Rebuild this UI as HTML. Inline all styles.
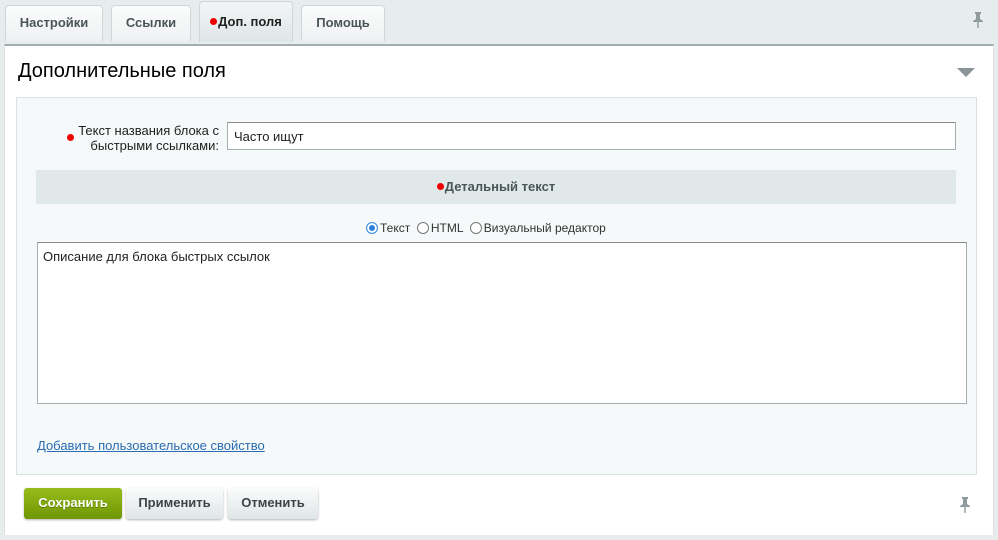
<!DOCTYPE html>
<html><head><meta charset="utf-8"><style>
*{box-sizing:border-box}
body{margin:0;width:998px;height:540px;background:#e7eced;font-family:"Liberation Sans",Arial,sans-serif;position:relative;overflow:hidden}
.tab{position:absolute;top:5px;height:36px;border:1px solid #cfd6d8;border-bottom:none;border-radius:4px 4px 0 0;background:linear-gradient(#fbfcfc,#eef1f2);font-size:13px;font-weight:bold;color:#4b5557;text-align:center;line-height:33px}
.tab.act{top:1px;height:41px;background:linear-gradient(#f2f5f5,#dfe6e8);color:#222;line-height:40px}
.dot{display:inline-block;width:7px;height:7px;border-radius:50%;background:#e00;vertical-align:1px;margin-right:1px}
#panel{position:absolute;left:4px;top:44px;width:990px;height:491px;background:#fff;border-top:2px solid #a3acae;border-left:1px solid #dde3e4;border-right:1px solid #dde3e4}
h1{position:absolute;left:18px;top:60px;margin:0;font-size:20px;font-weight:normal;color:#000}
#inner{position:absolute;left:16px;top:97px;width:961px;height:378px;background:#f5f9f9;border:1px solid #dbe1e2}
.abs{position:absolute}
.btn{position:absolute;top:488px;height:31px;border-radius:3px;font-size:13px;font-weight:bold;text-align:center;line-height:30px;color:#3c4446;background:linear-gradient(#fbfcfc,#dfe5e7);box-shadow:0 1px 2px rgba(0,0,0,.3)}
.radio{display:inline-block;width:12px;height:12px;border:1px solid #777;border-radius:50%;vertical-align:-2px;margin-right:2px;background:#fff}
</style></head><body>
<div class="tab" style="left:5px;width:98px">Настройки</div>
<div class="tab" style="left:111px;width:80px">Ссылки</div>
<div class="tab act" style="left:199px;width:94px"><span class="dot"></span>Доп. поля</div>
<div class="tab" style="left:301px;width:84px">Помощь</div>
<svg class="abs" style="left:971px;top:11px" width="14" height="18" viewBox="0 0 14 18"><path d="M4 1h6v2H9v5l3 2v1H2v-1l3-2V3H4z" fill="#8e9a9c"/><rect x="6.3" y="11" width="1.4" height="6" fill="#8e9a9c"/></svg>
<div id="panel"></div>
<h1>Дополнительные поля</h1>
<svg class="abs" style="left:957px;top:68px" width="18" height="9"><path d="M0 0h18L9 9z" fill="#8a9496"/></svg>
<div id="inner"></div>
<div class="abs" style="left:40px;top:123px;width:179px;text-align:right;font-size:13px;color:#222;line-height:15px"><span class="dot" style="position:absolute;left:27px;top:11px"></span>Текст названия блока с быстрыми ссылками:</div>
<div class="abs" style="left:227px;top:122px;width:729px;height:28px;background:#fff;border:1px solid #a6aeb0;border-top-color:#888;font-size:13px;padding:6px 6px;color:#222">Часто ищут</div>
<div class="abs" style="left:36px;top:170px;width:920px;height:34px;background:#e0e8ea;text-align:center;font-size:13px;font-weight:bold;color:#4b5557;line-height:33px"><span class="dot"></span>Детальный текст</div>
<div class="abs" style="left:366px;top:221px;font-size:12px;color:#333"><span class="radio" style="border:1px solid #3b8de0;box-shadow:inset 0 0 0 2px #fff;background:#2f7fd6"></span>Текст &nbsp;<span class="radio"></span>HTML &nbsp;<span class="radio"></span>Визуальный редактор</div>
<div class="abs" style="left:37px;top:242px;width:930px;height:162px;background:#fff;border:1px solid #a6aeb0;border-top-color:#888;font-size:13px;padding:6px 5px;color:#222">Описание для блока быстрых ссылок</div>
<div class="abs" style="left:37px;top:438px;font-size:13px;color:#2a6cb1;text-decoration:underline">Добавить пользовательское свойство</div>
<div class="btn" style="left:24px;width:98px;background:linear-gradient(#97bb1a,#6f9705);color:#fff;text-shadow:0 1px 0 #5a7a00">Сохранить</div>
<div class="btn" style="left:126px;width:97px">Применить</div>
<div class="btn" style="left:228px;width:90px">Отменить</div>
<svg class="abs" style="left:958px;top:496px" width="14" height="18" viewBox="0 0 14 18"><path d="M4 1h6v2H9v5l3 2v1H2v-1l3-2V3H4z" fill="#8e9a9c"/><rect x="6.3" y="11" width="1.4" height="6" fill="#8e9a9c"/></svg>
</body></html>
